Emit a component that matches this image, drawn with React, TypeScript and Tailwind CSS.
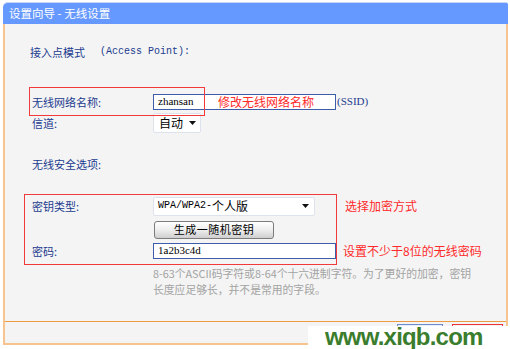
import React from "react";

const Arrow = () => (
  <svg width="7" height="4" viewBox="0 0 7 4" className="block">
    <polygon points="0,0 7,0 3.5,4" fill="#111" />
  </svg>
);

const Label = ({ children }: { children: React.ReactNode }) => (
  <div className="w-[121px] shrink-0 text-[11px] leading-[14px] text-[#1b3b8f]">{children}</div>
);

export default function App() {
  return (
    <div className="relative w-[510px] h-[349px] overflow-hidden bg-white pt-[2px] pl-[3px] font-['Noto_Sans_CJK_SC',sans-serif]">
      <div className="w-[505px]">
        {/* title bar */}
        <div className="h-[22px] border-t border-[#c9d7f6] bg-[#6699ff] rounded-tl-[5px] rounded-tr-[2px] flex items-center pl-[6px] text-white text-[11.5px] leading-none">
          设置向导 - 无线设置
        </div>
        {/* body */}
        <div className="border-x-2 border-b-2 border-[#f7c38f] bg-[#f4f4f4]">
          <div className="h-[297px] pt-[20px] pl-[25px]">
            {/* Row A */}
            <div className="h-[16px] flex items-center text-[11px] leading-[14px] text-[#1b3b8f]">
              <span>接入点模式</span>
              <span className="ml-[15px] font-['Liberation_Mono',monospace] text-[10px]">(Access Point):</span>
            </div>
            {/* Row B */}
            <div className="mt-[32px] ml-[2px] h-[19px] flex items-center">
              <Label>无线网络名称:</Label>
              <div className="relative w-[183px] h-[16px] border border-[#3d5caa] bg-white flex items-center pl-[4px]">
                <span className="font-['Liberation_Serif',serif] text-[11px] leading-none text-black">zhansan</span>
                <span className="absolute left-[64px] top-[0px] text-[12px] leading-[14px] text-[#ff2a2a]">修改无线网络名称</span>
              </div>
              <span className="ml-[1px] font-['Liberation_Serif',serif] text-[11px] leading-none text-[#1b3b8f]">(SSID)</span>
            </div>
            {/* Row C */}
            <div className="mt-[2px] ml-[2px] h-[20px] flex items-center">
              <Label>信道:</Label>
              <div className="w-[48px] h-[20px] border border-[#dde2ec] rounded-[2px] bg-white flex items-center pl-[5px] pr-[4px] justify-between">
                <span className="text-[12px] leading-none text-black">自动</span>
                <Arrow />
              </div>
            </div>
            {/* Row D */}
            <div className="mt-[23px] ml-[2px] h-[16px] flex items-center">
              <Label>无线安全选项:</Label>
            </div>
            {/* Row E */}
            <div className="mt-[24px] ml-[2px] h-[20px] flex items-center">
              <Label>密钥类型:</Label>
              <div className="w-[162px] h-[19px] border border-[#dde2ec] rounded-[2px] bg-white flex items-center pl-[4px] pr-[5px] justify-between">
                <span className="text-[12px] leading-none text-black flex items-center">
                  <span className="font-['Liberation_Mono',monospace] text-[10px]">WPA/WPA2-</span>
                  <span>个人版</span>
                </span>
                <Arrow />
              </div>
              <span className="ml-[30px] text-[12px] leading-[14px] text-[#ff2a2a]">选择加密方式</span>
            </div>
            {/* Row F */}
            <div className="mt-[4px] ml-[2px] h-[19px] flex items-center">
              <div className="w-[122px] shrink-0" />
              <div className="w-[120px] h-[18px] border border-[#7c7c7c] rounded-[3px] bg-linear-to-b from-[#ffffff] via-[#eeeeee] to-[#cfcfcf] flex items-center justify-center text-[11px] leading-none text-black tracking-[0.5px]">
                生成一随机密钥
              </div>
            </div>
            {/* Row G */}
            <div className="mt-[3px] ml-[2px] h-[17px] flex items-center">
              <Label>密码:</Label>
              <div className="w-[183px] h-[16px] border border-[#3d5caa] bg-white flex items-center pl-[4px]">
                <span className="font-['Liberation_Serif',serif] text-[11px] leading-none text-black">1a2b3c4d</span>
              </div>
              <span className="ml-[7px] text-[12px] leading-[14px] text-[#ff2a2a]">设置不少于8位的无线密码</span>
            </div>
            {/* help */}
            <div className="mt-[6px] ml-[123px] text-[10.8px] leading-[16px] text-[#a3a3a3] whitespace-nowrap">
              8-63个ASCII码字符或8-64个十六进制字符。为了更好的加密，密钥
              <br />
              长度应足够长，并不是常用的字段。
            </div>
          </div>
          {/* footer */}
          <div className="h-[22px] border-t border-[#ef9b3f] flex justify-end items-start pt-[2px] pr-[3px] gap-[9px]">
            <div className="w-[46px] h-[18px] border border-[#6f8ccc] bg-[#e9edf7]" />
            <div className="w-[51px] h-[18px] border border-[#e33] p-[1px]">
              <div className="w-full h-full border border-[#6f8ccc] bg-[#e9edf7]" />
            </div>
          </div>
        </div>
      </div>

      {/* annotation boxes */}
      <div className="pointer-events-none absolute left-[29px] top-[87px] w-[176px] h-[29px] border border-[#f23a3a]" />
      <div className="pointer-events-none absolute left-[24px] top-[194px] w-[313px] h-[71px] border border-[#f23a3a]" />

      {/* watermark */}
      <div className="absolute left-[308px] top-[326px] w-[202px] h-[23px] overflow-hidden bg-white pl-[17px] font-['Liberation_Sans',sans-serif] font-bold text-[24px] leading-[22px] tracking-[-0.8px] text-[#3a7d2c] whitespace-nowrap">
        www.xiqb.com
      </div>
    </div>
  );
}
